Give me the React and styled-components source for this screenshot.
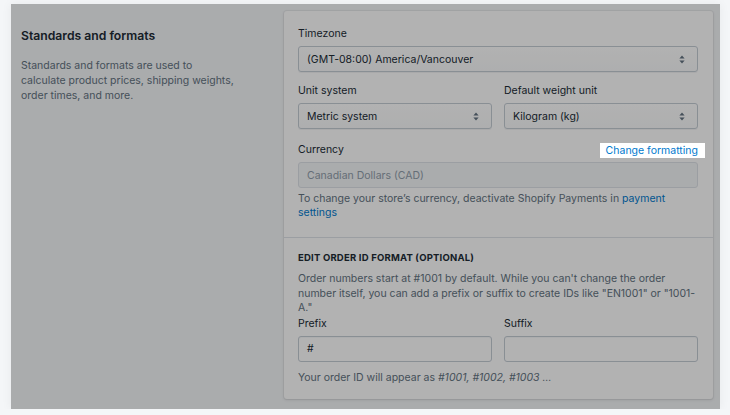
import React from "react";
import styled, { createGlobalStyle } from "styled-components";

const GlobalStyle = createGlobalStyle`
  html, body {
    margin: 0;
    padding: 0;
    background: #f4f6f8;
    font-family: Inter, "Noto Sans", sans-serif;
    color: #212b36;
  }
  * { box-sizing: border-box; }
`;

// dimmed page with one highlighted element (tour step)
const Frame = styled.div`
  position: relative;
  width: 709px;
  height: 405px;
  margin: 4px 0 0 11px;
  padding: 7px 7px 9px 10px;
  background: #f4f6f8;
  box-shadow: 0 0 10px rgba(0, 0, 0, 0.06);
  display: grid;
  grid-template-columns: 263px 1fr;
  align-items: start;
  &::after {
    content: "";
    position: absolute;
    inset: 0;
    background: rgba(0, 0, 0, 0.3);
    z-index: 1;
    pointer-events: none;
  }
`;

const Annotation = styled.div`
  padding-top: 16px;
  max-width: 214px;
`;

const AnnotationTitle = styled.h2`
  margin: 0;
  font-size: 12.2px;
  line-height: 17px;
  font-weight: 600;
  color: #212b36;
`;

const AnnotationText = styled.p`
  margin: 14px 0 0;
  font-size: 10.5px;
  line-height: 15px;
  color: #637381;
`;

const Card = styled.div`
  background: #fff;
  border-radius: 3px;
  box-shadow: 0 0 0 1px rgba(63, 63, 68, 0.05), 0 1px 3px 0 rgba(63, 63, 68, 0.15);
`;

const Section = styled.div`
  padding: ${p => p.pad};
  & + & {
    border-top: 1px solid #dfe3e8;
  }
`;

const Field = styled.div`
  margin-top: ${p => p.top || 0}px;
`;

const Row = styled.div`
  display: grid;
  grid-template-columns: 1fr 1fr;
  gap: 12px;
  margin-top: ${p => p.top || 0}px;
`;

const LabelRow = styled.div`
  display: flex;
  justify-content: space-between;
  align-items: center;
  height: 14px;
  margin-bottom: 5px;
`;

const Label = styled.label`
  font-size: 10.5px;
  line-height: 14px;
  color: #212b36;
`;

const HighlightLink = styled.a`
  position: relative;
  z-index: 2;
  margin-right: -7px;
  padding: 0 7px 0 6px;
  background: #fff;
  font-size: 10.5px;
  line-height: 15px;
  color: #007ace;
  text-decoration: none;
`;

const SelectBox = styled.div`
  height: 26px;
  display: flex;
  align-items: center;
  justify-content: space-between;
  padding: 0 12px 0 8px;
  font-size: 10.5px;
  color: #212b36;
  background: linear-gradient(180deg, #fff, #f9fafb);
  border: 1px solid #c4cdd5;
  border-radius: 3px;
  box-shadow: 0 1px 0 0 rgba(22, 29, 37, 0.05);
`;

const Input = styled.div`
  height: 26px;
  display: flex;
  align-items: center;
  padding: 0 8px;
  font-size: 10.5px;
  color: ${p => (p.disabled ? "#919eab" : "#212b36")};
  background: ${p => (p.disabled ? "#f4f6f8" : "#fff")};
  border: 1px solid ${p => (p.disabled ? "#dfe3e8" : "#c4cdd5")};
  border-radius: 3px;
  box-shadow: ${p => (p.disabled ? "none" : "inset 0 1px 0 0 rgba(99, 115, 129, 0.05)")};
`;

const Help = styled.p`
  margin: ${p => p.top || 0}px 0 0;
  font-size: 10.5px;
  line-height: 14px;
  color: #637381;
  em { font-style: italic; }
`;

const Link = styled.a`
  color: #007ace;
  text-decoration: none;
`;

const Subheading = styled.h3`
  margin: 0;
  font-size: 9.5px;
  line-height: 14px;
  font-weight: 700;
  letter-spacing: 0.2px;
  text-transform: uppercase;
  color: #212b36;
`;

const Paragraph = styled.p`
  margin: 7px 0 1px;
  font-size: 10.5px;
  line-height: 14.5px;
  color: #637381;
`;

const Arrows = () => (
  <svg width="6" height="9" viewBox="0 0 6 9" fill="#637381">
    <path d="M3 0.5 L5.6 3.4 H0.4 Z" />
    <path d="M3 8.5 L0.4 5.6 H5.6 Z" />
  </svg>
);

const Select = ({ value }) => (
  <SelectBox>
    <span>{value}</span>
    <Arrows />
  </SelectBox>
);

export default function App() {
  return (
    <>
      <GlobalStyle />
      <Frame>
        <Annotation>
          <AnnotationTitle>Standards and formats</AnnotationTitle>
          <AnnotationText>
            Standards and formats are used to calculate product prices, shipping weights,
            order times, and more.
          </AnnotationText>
        </Annotation>
        <Card>
          <Section pad="16px 15px 17px 14px">
            <Field>
              <LabelRow>
                <Label>Timezone</Label>
              </LabelRow>
              <Select value="(GMT-08:00) America/Vancouver" />
            </Field>
            <Row top={12}>
              <Field>
                <LabelRow>
                  <Label>Unit system</Label>
                </LabelRow>
                <Select value="Metric system" />
              </Field>
              <Field>
                <LabelRow>
                  <Label>Default weight unit</Label>
                </LabelRow>
                <Select value="Kilogram (kg)" />
              </Field>
            </Row>
            <Field top={14}>
              <LabelRow>
                <Label>Currency</Label>
                <HighlightLink>Change formatting</HighlightLink>
              </LabelRow>
              <Input disabled>Canadian Dollars (CAD)</Input>
              <Help top={4}>
                To change your store’s currency, deactivate Shopify Payments in{" "}
                <Link>payment settings</Link>
              </Help>
            </Field>
          </Section>
          <Section pad="13px 15px 14px 14px">
            <Subheading>Edit order ID format (optional)</Subheading>
            <Paragraph>
              Order numbers start at #1001 by default. While you can't change the order
              number itself, you can add a prefix or suffix to create IDs like "EN1001" or
              "1001-A."
            </Paragraph>
            <Row>
              <Field>
                <LabelRow>
                  <Label>Prefix</Label>
                </LabelRow>
                <Input>#</Input>
              </Field>
              <Field>
                <LabelRow>
                  <Label>Suffix</Label>
                </LabelRow>
                <Input />
              </Field>
            </Row>
            <Help top={9}>
              Your order ID will appear as <em>#1001, #1002, #1003 ...</em>
            </Help>
          </Section>
        </Card>
      </Frame>
    </>
  );
}
